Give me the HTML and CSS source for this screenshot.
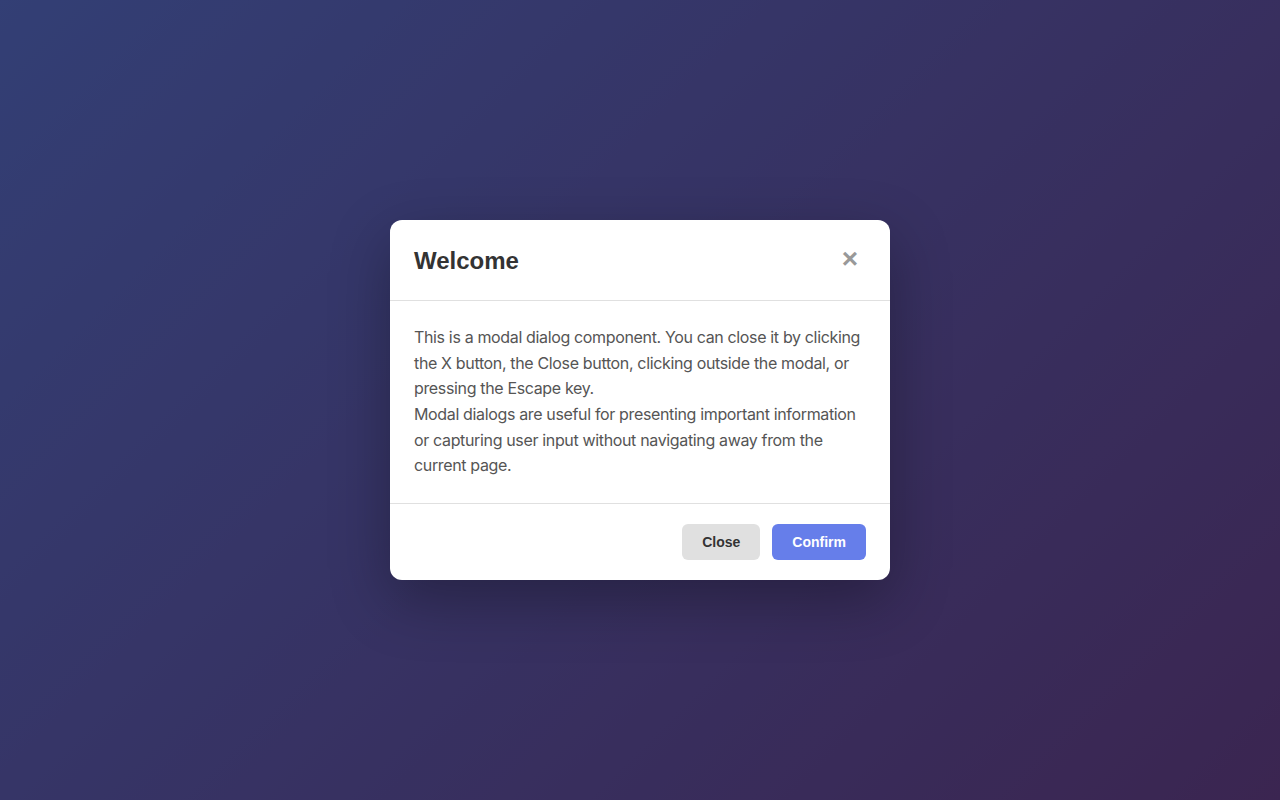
FILE: index.html
```html
<!DOCTYPE html>
<html lang="en">
<head>
<meta charset="utf-8">
<title>Modal</title>
<link rel="stylesheet" href="styles.css">
</head>
<body>
<div class="page">
  <div class="overlay">
    <div class="modal" role="dialog" aria-labelledby="modal-title">
      <div class="modal-header">
        <h2 id="modal-title" class="modal-title">Welcome</h2>
        <button class="modal-x" aria-label="Close">&times;</button>
      </div>
      <div class="modal-body">
        <p>This is a modal dialog component. You can close it by clicking the X button, the Close button, clicking outside the modal, or pressing the Escape key.</p>
        <p>Modal dialogs are useful for presenting important information or capturing user input without navigating away from the current page.</p>
      </div>
      <div class="modal-footer">
        <button class="btn btn-secondary">Close</button>
        <button class="btn btn-primary">Confirm</button>
      </div>
    </div>
  </div>
</div>
</body>
</html>
```
FILE: styles.css
```css
html, body {
  margin: 0;
  padding: 0;
  height: 100%;
}
body {
  font-family: Inter, "Noto Sans", sans-serif;
}
.page {
  min-height: 100vh;
  background: linear-gradient(135deg, #667eea 0%, #764ba2 100%);
}
.overlay {
  min-height: 100vh;
  background: rgba(0, 0, 0, 0.5);
  display: flex;
  align-items: center;
  justify-content: center;
}
.modal {
  width: 500px;
  background: #fff;
  border-radius: 12px;
  box-shadow: 0 20px 60px rgba(0, 0, 0, 0.3);
  overflow: hidden;
}
.modal-header {
  display: flex;
  align-items: center;
  justify-content: space-between;
  padding: 24px;
  border-bottom: 1px solid #e0e0e0;
}
.modal-title {
  margin: 0;
  padding-top: 1px;
  font-family: "Liberation Sans", Arial, sans-serif;
  font-size: 24px;
  font-weight: 700;
  line-height: 31px;
  color: #333;
}
.modal-x {
  width: 32px;
  height: 32px;
  padding: 0 0 3px;
  border: none;
  background: none;
  font-family: "Liberation Sans", Arial, sans-serif;
  font-size: 28px;
  font-weight: 700;
  line-height: 29px;
  color: #999;
  cursor: pointer;
  border-radius: 4px;
}
.modal-body {
  padding: 24px;
  font-size: 16px;
  line-height: 1.6;
  letter-spacing: -0.35px;
  color: #555;
}
.modal-body p {
  margin: 0;
}
.modal-footer {
  display: flex;
  justify-content: flex-end;
  gap: 12px;
  padding: 20px 24px;
  border-top: 1px solid #e0e0e0;
}
.btn {
  height: 36px;
  padding: 0 20px;
  border: none;
  border-radius: 6px;
  font-family: "Liberation Sans", Arial, sans-serif;
  font-size: 14px;
  font-weight: 700;
  cursor: pointer;
}
.btn-secondary {
  background: #e0e0e0;
  color: #333;
}
.btn-primary {
  background: #667eea;
  color: #fff;
}
```
